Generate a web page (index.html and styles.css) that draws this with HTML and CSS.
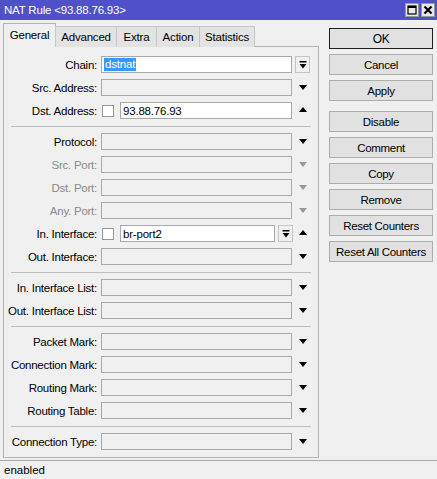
FILE: index.html
```html
<!DOCTYPE html>
<html>
<head>
<meta charset="utf-8">
<link rel="stylesheet" href="styles.css">
</head>
<body>
<div class="window">
  <div class="titlebar">
    <span class="title">NAT Rule &lt;93.88.76.93&gt;</span>
    <div class="tb-btns">
      <span class="tb-btn"><svg width="10" height="10" viewBox="0 0 10 10"><rect x="1" y="1" width="8" height="8" fill="none" stroke="#000" stroke-width="1.2"/><rect x="1" y="1" width="8" height="2" fill="#000"/></svg></span>
      <span class="tb-btn"><svg width="10" height="10" viewBox="0 0 10 10"><path d="M1.5 1.5 L8.5 8.5 M8.5 1.5 L1.5 8.5" stroke="#000" stroke-width="2.2"/></svg></span>
    </div>
  </div>
  <div class="main">
    <div class="left">
      <div class="tabs">
        <div class="tab active t-gen">General</div>
        <div class="tab t-adv">Advanced</div>
        <div class="tab t-ext">Extra</div>
        <div class="tab t-act">Action</div>
        <div class="tab t-sta">Statistics</div>
      </div>
      <div class="panel">
        <div class="row">
          <label>Chain:</label>
          <div class="field white"><span class="sel">dstnat</span></div>
          <span class="dd"><svg width="8" height="8" viewBox="0 0 8 8"><rect x="0.5" y="0" width="7" height="1.5" fill="#000"/><path d="M0.5 3 H7.5 L4 7.5 Z" fill="#000"/></svg></span>
        </div>
        <div class="row">
          <label>Src. Address:</label>
          <div class="field"></div>
          <span class="arr down"></span>
        </div>
        <div class="row">
          <label>Dst. Address:</label>
          <span class="cb"></span>
          <div class="field white short">93.88.76.93</div>
          <span class="arr up"></span>
        </div>
        <div class="sep"></div>
        <div class="row">
          <label>Protocol:</label>
          <div class="field"></div>
          <span class="arr down"></span>
        </div>
        <div class="row dis">
          <label>Src. Port:</label>
          <div class="field"></div>
          <span class="arr down"></span>
        </div>
        <div class="row dis">
          <label>Dst. Port:</label>
          <div class="field"></div>
          <span class="arr down"></span>
        </div>
        <div class="row dis">
          <label>Any. Port:</label>
          <div class="field"></div>
          <span class="arr down"></span>
        </div>
        <div class="row">
          <label>In. Interface:</label>
          <span class="cb"></span>
          <div class="field white shorter">br-port2</div>
          <span class="dd"><svg width="8" height="8" viewBox="0 0 8 8"><rect x="0.5" y="0" width="7" height="1.5" fill="#000"/><path d="M0.5 3 H7.5 L4 7.5 Z" fill="#000"/></svg></span>
          <span class="arr up"></span>
        </div>
        <div class="row">
          <label>Out. Interface:</label>
          <div class="field"></div>
          <span class="arr down"></span>
        </div>
        <div class="sep"></div>
        <div class="row">
          <label>In. Interface List:</label>
          <div class="field"></div>
          <span class="arr down"></span>
        </div>
        <div class="row">
          <label>Out. Interface List:</label>
          <div class="field"></div>
          <span class="arr down"></span>
        </div>
        <div class="sep"></div>
        <div class="row">
          <label>Packet Mark:</label>
          <div class="field"></div>
          <span class="arr down"></span>
        </div>
        <div class="row">
          <label>Connection Mark:</label>
          <div class="field"></div>
          <span class="arr down"></span>
        </div>
        <div class="row">
          <label>Routing Mark:</label>
          <div class="field"></div>
          <span class="arr down"></span>
        </div>
        <div class="row">
          <label>Routing Table:</label>
          <div class="field"></div>
          <span class="arr down"></span>
        </div>
        <div class="sep"></div>
        <div class="row">
          <label>Connection Type:</label>
          <div class="field"></div>
          <span class="arr down"></span>
        </div>
      </div>
    </div>
    <div class="right">
      <div class="btn default">OK</div>
      <div class="btn">Cancel</div>
      <div class="btn">Apply</div>
      <div class="btn gap">Disable</div>
      <div class="btn">Comment</div>
      <div class="btn">Copy</div>
      <div class="btn">Remove</div>
      <div class="btn">Reset Counters</div>
      <div class="btn">Reset All Counters</div>
    </div>
  </div>
  <div class="status">enabled</div>
</div>
</body>
</html>
```

FILE: styles.css
```css
* { box-sizing: border-box; }
html, body { margin: 0; padding: 0; }
body {
  width: 437px;
  height: 479px;
  background: #f0f0f0;
  font-family: "Liberation Sans", Arial, sans-serif;
  font-size: 11px;
  color: #000;
  overflow: hidden;
}
.window { display: flex; flex-direction: column; height: 479px; }
.titlebar {
  height: 20px;
  background: #5050c8;
  display: flex;
  align-items: center;
  justify-content: space-between;
  padding: 0 2px 0 4px;
}
.title { color: #fff; font-size: 11.5px; letter-spacing: -0.2px; }
.tb-btns { display: flex; gap: 2px; }
.tb-btn {
  width: 14px; height: 14px;
  background: #e8e8e8;
  border: 1px solid #999;
  display: flex; align-items: center; justify-content: center;
}
.main { display: flex; flex: 1; }
.left { width: 316px; margin-left: 3px; padding-top: 3px; display: flex; flex-direction: column; }
.tabs { display: flex; align-items: flex-end; height: 24px; position: relative; z-index: 1; margin-bottom: -1px; }
.tab {
  height: 21px;
  background: #e3e3e3;
  border: 1px solid #c6c6c6;
  border-bottom: none;
  display: flex; align-items: center; justify-content: center;
  margin-left: -1px;
  font-size: 11.5px;
  letter-spacing: -0.2px;
}
.tab.active { height: 24px; background: #f0f0f0; border-color: #b4b4b4; margin-left: 0; padding-bottom: 2px; }
.t-gen { width: 53px; }
.t-adv { width: 62px; }
.t-ext { width: 41px; }
.t-act { width: 44px; }
.t-sta { width: 56px; }
.panel {
  height: 412px;
  border: 1px solid #b4b4b4;
  padding-top: 6px;
  display: flex; flex-direction: column;
}
.row {
  height: 23px;
  display: flex;
  align-items: center;
}
.row label {
  width: 96px;
  text-align: right;
  padding-right: 3px;
  white-space: nowrap;
  letter-spacing: -0.25px;
  font-size: 11.5px;
}
.row.dis label { color: #8a8a8a; }
.field {
  width: 191px;
  height: 17px;
  margin-left: 1px;
  border: 1px solid #a9a9a9;
  background: #f0f0f0;
  display: flex; align-items: center;
  padding-left: 2px;
  font-size: 11.5px;
  letter-spacing: -0.2px;
}
.field.white { background: #fff; }
.field.short { width: 172px; margin-left: 6px; }
.field.shorter { width: 155px; margin-left: 6px; }
.sel { background: #3399ff; color: #fff; padding: 0 1px; line-height: 13px; }
.cb {
  width: 12px; height: 12px;
  border: 1px solid #999;
  background: #fff;
  margin-left: 2px;
}
.dd {
  width: 15px; height: 17px;
  margin-left: 2px;
  border: 1px solid #c4c4c4;
  background: #f0f0f0;
  display: flex; align-items: center; justify-content: center;
}
.field + .dd { margin-left: 3px; }
.arr { width: 0; height: 0; margin-left: 7px; }
.arr.down { border-left: 4.5px solid transparent; border-right: 4.5px solid transparent; border-top: 5px solid #000; }
.arr.up { border-left: 4.5px solid transparent; border-right: 4.5px solid transparent; border-bottom: 5px solid #000; margin-top: -2px; }
.dd + .arr.up { margin-left: 6px; }
.row.dis .arr.down { border-top-color: #999; }
.sep { height: 8px; padding-top: 4px; margin: 0 7px; }
.sep::before { content: ""; display: block; height: 1px; background: #bdbdbd; }
.right { flex: 1; padding-top: 8px; padding-left: 10px; display: flex; flex-direction: column; gap: 5px; }
.btn {
  width: 104px;
  height: 21px;
  border: 1px solid #adadad;
  background: #e1e1e1;
  display: flex; align-items: center; justify-content: center;
  font-size: 11.5px;
  letter-spacing: -0.3px;
}
.btn.default { border: 1px solid #1e1e1e; font-size: 12px; }
.btn.gap { margin-top: 5px; }
.status {
  height: 19px;
  border-top: 1px solid #a8a8a8;
  padding-left: 4px;
  display: flex; align-items: center;
  margin-top: 2px;
  font-size: 11.5px;
}
```
